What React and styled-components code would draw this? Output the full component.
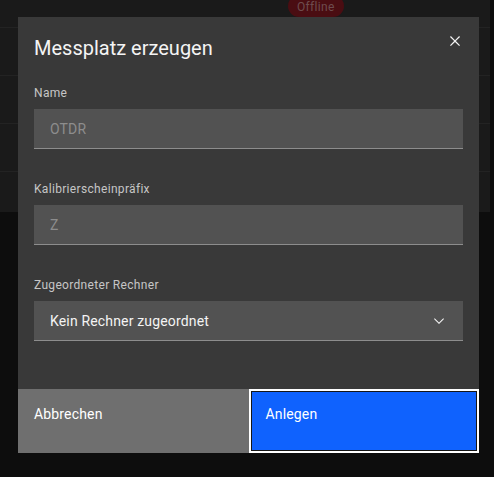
import React, { useState } from 'react';
import styled, { createGlobalStyle } from 'styled-components';

const GlobalStyle = createGlobalStyle`
  html, body {
    margin: 0;
    padding: 0;
    background: #0d0d0d;
    font-family: Roboto, "Noto Sans", "Liberation Sans", sans-serif;
  }
  * { box-sizing: border-box; }
`;

const Page = styled.div`
  width: 494px;
  height: 477px;
  position: relative;
  overflow: hidden;
  background: #0d0d0d;
`;

const Table = styled.div`
  width: 490px;
  background: #1a1a1a;
  display: flex;
  flex-direction: column;
`;

const Row = styled.div`
  height: ${({ h }) => h}px;
  border-bottom: ${({ last }) => (last ? 'none' : '1px solid #232323')};
  position: relative;
`;

const Tag = styled.span`
  position: absolute;
  left: 288px;
  top: -5px;
  height: 22px;
  padding: 4px 9px 0;
  border-radius: 11px;
  background: #4a0d12;
  color: #6e4c4e;
  font-size: 12px;
  letter-spacing: 0.32px;
  line-height: 16px;
`;

const Overlay = styled.div`
  position: absolute;
  inset: 0;
  display: flex;
  align-items: flex-start;
  padding: 17px 0 0 18px;
`;

const Modal = styled.div`
  width: 461px;
  background: #393939;
  display: flex;
  flex-direction: column;
`;

const Header = styled.div`
  position: relative;
  padding: 17px 48px 0 16px;
  margin-bottom: 23px;
`;

const Title = styled.h2`
  margin: 0;
  font-size: 20px;
  line-height: 28px;
  font-weight: 400;
  color: #f4f4f4;
`;

const CloseButton = styled.button`
  position: absolute;
  top: 0;
  right: 0;
  width: 48px;
  height: 48px;
  border: none;
  background: transparent;
  padding: 0;
  display: flex;
  align-items: center;
  justify-content: center;
  cursor: pointer;
  color: #f4f4f4;
`;

const Body = styled.div`
  padding: 0 16px 48px;
  display: flex;
  flex-direction: column;
  gap: 32px;
`;

const Field = styled.div`
  display: flex;
  flex-direction: column;
`;

const Label = styled.label`
  font-size: 12px;
  line-height: 16px;
  letter-spacing: 0.32px;
  color: #c6c6c6;
  margin-bottom: 8px;
`;

const Input = styled.input`
  height: 40px;
  width: 100%;
  border: none;
  border-bottom: 1px solid #8d8d8d;
  background: #525252;
  color: #f4f4f4;
  padding: 0 16px;
  font-family: inherit;
  font-size: 14px;
  letter-spacing: 0.16px;
  outline: none;

  &::placeholder {
    color: #8d8d8d;
  }
`;

const SelectBox = styled.div`
  height: 40px;
  border-bottom: 1px solid #8d8d8d;
  background: #525252;
  color: #f4f4f4;
  padding: 0 16px;
  font-size: 14px;
  letter-spacing: 0.16px;
  display: flex;
  align-items: center;
  justify-content: space-between;
`;

const Footer = styled.div`
  display: grid;
  grid-template-columns: 1fr 1fr;
  height: 64px;
`;

const Button = styled.button`
  height: 64px;
  border: ${({ focused }) => (focused ? '2px solid #ffffff' : '1px solid transparent')};
  box-shadow: ${({ focused }) => (focused ? 'inset 0 0 0 1px #161616' : 'none')};
  background: ${({ primary }) => (primary ? '#0f62fe' : '#6f6f6f')};
  color: #ffffff;
  font-family: inherit;
  font-size: 14px;
  line-height: 18px;
  letter-spacing: 0.16px;
  text-align: left;
  padding: ${({ focused }) => (focused ? '14px 15px 0' : '15px 15px 0')};
  display: flex;
  align-items: flex-start;
  cursor: pointer;
`;

const CloseIcon = () => (
  <svg width="20" height="20" viewBox="0 0 32 32" fill="currentColor">
    <path d="M24 9.4L22.6 8 16 14.6 9.4 8 8 9.4 14.6 16 8 22.6 9.4 24 16 17.4 22.6 24 24 22.6 17.4 16 24 9.4z" />
  </svg>
);

const ChevronDown = () => (
  <svg width="16" height="16" viewBox="0 0 16 16" fill="#f4f4f4">
    <path d="M8 11L3 6l.7-.7L8 9.6l4.3-4.3.7.7z" />
  </svg>
);

export default function App() {
  const [name, setName] = useState('');
  const [prefix, setPrefix] = useState('');

  return (
    <Page>
      <GlobalStyle />
      <Table>
        <Row h={28}>
          <Tag>Offline</Tag>
        </Row>
        <Row h={48} />
        <Row h={48} />
        <Row h={48} />
        <Row h={40} last />
      </Table>
      <Overlay>
        <Modal>
          <Header>
            <Title>Messplatz erzeugen</Title>
            <CloseButton aria-label="Schließen">
              <CloseIcon />
            </CloseButton>
          </Header>
          <Body>
            <Field>
              <Label>Name</Label>
              <Input placeholder="OTDR" value={name} onChange={(e) => setName(e.target.value)} />
            </Field>
            <Field>
              <Label>Kalibrierscheinpräfix</Label>
              <Input placeholder="Z" value={prefix} onChange={(e) => setPrefix(e.target.value)} />
            </Field>
            <Field>
              <Label>Zugeordneter Rechner</Label>
              <SelectBox>
                <span>Kein Rechner zugeordnet</span>
                <ChevronDown />
              </SelectBox>
            </Field>
          </Body>
          <Footer>
            <Button>Abbrechen</Button>
            <Button primary focused>Anlegen</Button>
          </Footer>
        </Modal>
      </Overlay>
    </Page>
  );
}
